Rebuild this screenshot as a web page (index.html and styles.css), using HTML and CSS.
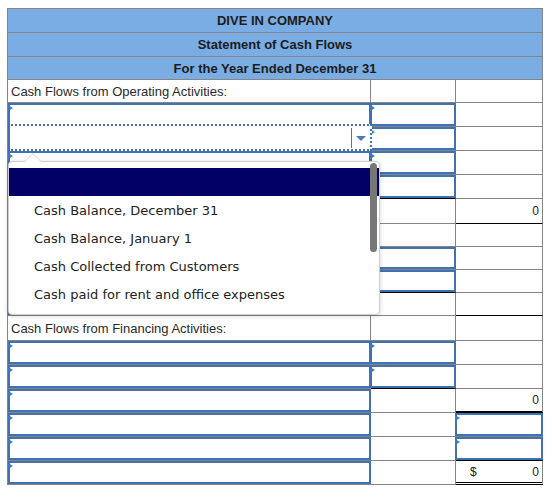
FILE: index.html
```html
<!DOCTYPE html>
<html lang="en">
<head>
<meta charset="utf-8">
<title>Statement of Cash Flows</title>
<link rel="stylesheet" href="styles.css">
</head>
<body>
<div class="page">
  <div class="sheet">
    <div class="hd">DIVE IN COMPANY</div>
    <div class="hd">Statement of Cash Flows</div>
    <div class="hd">For the Year Ended December 31</div>

    <div class="c lbl">Cash Flows from Operating Activities:</div><div class="c"></div><div class="c"></div>

    <div class="c"><div class="inp mk"></div></div><div class="c"><div class="inp l mk"></div></div><div class="c"></div>
    <div class="c"><div class="sel"><span class="sep"></span><span class="arr"></span></div></div><div class="c"><div class="inp l mk"></div></div><div class="c"></div>
    <div class="c"><div class="inp mk"></div></div><div class="c"><div class="inp l mk"></div></div><div class="c"></div>
    <div class="c"><div class="inp mk"></div></div><div class="c ub"><div class="inp l mk"></div></div><div class="c"></div>
    <div class="c"><div class="inp mk"></div></div><div class="c"></div><div class="c ub num">0</div>
    <div class="c"><div class="inp mk"></div></div><div class="c"></div><div class="c"></div>
    <div class="c"><div class="inp mk"></div></div><div class="c"><div class="inp l mk"></div></div><div class="c"></div>
    <div class="c"><div class="inp mk"></div></div><div class="c ub"><div class="inp l mk"></div></div><div class="c"></div>
    <div class="c"><div class="inp mk"></div></div><div class="c"></div><div class="c ub"></div>

    <div class="c lbl">Cash Flows from Financing Activities:</div><div class="c"></div><div class="c"></div>

    <div class="c"><div class="inp mk"></div></div><div class="c"><div class="inp l mk"></div></div><div class="c"></div>
    <div class="c"><div class="inp mk"></div></div><div class="c ub"><div class="inp l mk"></div></div><div class="c"></div>
    <div class="c"><div class="inp mk"></div></div><div class="c"></div><div class="c ub2 num">0</div>
    <div class="c"><div class="inp mk"></div></div><div class="c"></div><div class="c"><div class="inp l mk"></div></div>
    <div class="c"><div class="inp mk"></div></div><div class="c"></div><div class="c ub"><div class="inp l mk"></div></div>
    <div class="c"><div class="inp mk"></div></div><div class="c"></div><div class="c dbl tot"><span>$</span><span>0</span></div>
  </div>

  <div class="pop">
    <div class="opt on"></div>
    <div class="opt">Cash Balance, December 31</div>
    <div class="opt">Cash Balance, January 1</div>
    <div class="opt">Cash Collected from Customers</div>
    <div class="opt">Cash paid for rent and office expenses</div>
    <div class="thumb"></div>
  </div>
</div>
</body>
</html>
```

FILE: styles.css
```css
* { box-sizing: border-box; }
html, body { margin: 0; background: #fff; }
body {
  font-family: "Liberation Sans", Arial, sans-serif;
  font-size: 13px;
  color: #222;
}
.page {
  position: relative;
  width: 552px;
  height: 504px;
  padding: 8px 0 0 7px;
}
.sheet {
  display: grid;
  width: 536px;
  grid-template-columns: 363px 85px 87px;
  grid-template-rows: 24px 24px 23px 23px 24px 24px 24px 24px 25px 23px 23px 23px 23px 25px repeat(6, 24px);
  border-left: 1px solid #858585;
  border-top: 1px solid #858585;
}
.hd {
  grid-column: 1 / -1;
  display: flex;
  align-items: center;
  justify-content: center;
  background: #7aade4;
  color: #1c1c1c;
  font-weight: bold;
  border-right: 1px solid #858585;
  border-bottom: 1px solid #858585;
}
.c {
  min-width: 0;
  border-right: 1px solid #858585;
  border-bottom: 1px solid #858585;
}
.lbl {
  display: flex;
  align-items: center;
  padding-left: 3px;
  color: #2a2a2a;
}
.ub { border-bottom-color: #000; }
.ub2 { border-bottom: 2px solid #000; }
.dbl { border-bottom: 3px double #000; }
.num {
  display: flex;
  align-items: center;
  justify-content: flex-end;
  padding-right: 3px;
  font-size: 12px;
}
.tot {
  display: flex;
  align-items: center;
  justify-content: space-between;
  padding: 0 3px 0 14px;
  font-size: 12px;
}
.inp {
  position: relative;
  height: 100%;
  margin-right: -1px;
  border: 2px solid #3f71b3;
}
.inp.l { margin-left: -1px; }
.mk::before {
  content: "";
  position: absolute;
  left: -2px;
  top: 0;
  border-left: 5px solid #3b78c6;
  border-top: 3px solid transparent;
  border-bottom: 3px solid transparent;
}
.sel {
  position: relative;
  z-index: 2;
  height: calc(100% + 4px);
  margin: -3px -2px 0 0;
  background: #fff;
  border: 2px dotted #3f71b3;
  border-left-style: solid;
}
.sep {
  position: absolute;
  left: 341px;
  top: 2px;
  width: 1px;
  height: 20px;
  background: #4a7ab8;
}
.arr {
  position: absolute;
  left: 346px;
  top: 10px;
  border-top: 5px solid #4a7ab8;
  border-left: 5px solid transparent;
  border-right: 5px solid transparent;
}
.pop {
  position: absolute;
  z-index: 5;
  left: 8px;
  top: 161px;
  width: 372px;
  height: 154px;
  padding-top: 6px;
  background: #fff;
  border: 1px solid #cfcfcf;
  border-radius: 4px;
  box-shadow: 0 1px 5px rgba(0, 0, 0, 0.18);
  font-family: "DejaVu Sans", Verdana, sans-serif;
  font-size: 13px;
  color: #222;
}
.pop::before {
  content: "";
  position: absolute;
  left: 15px;
  top: -9px;
  border-left: 9px solid transparent;
  border-right: 9px solid transparent;
  border-bottom: 9px solid #d3d3d3;
}
.pop::after {
  content: "";
  position: absolute;
  left: 16px;
  top: -8px;
  border-left: 8px solid transparent;
  border-right: 8px solid transparent;
  border-bottom: 8px solid #fff;
}
.opt {
  height: 28px;
  display: flex;
  align-items: center;
  padding-left: 25px;
  white-space: nowrap;
}
.opt.on { background: #000066; }
.thumb {
  position: absolute;
  left: 361px;
  top: 1px;
  width: 7px;
  height: 89px;
  border-radius: 4px;
  background: #777;
}
```
